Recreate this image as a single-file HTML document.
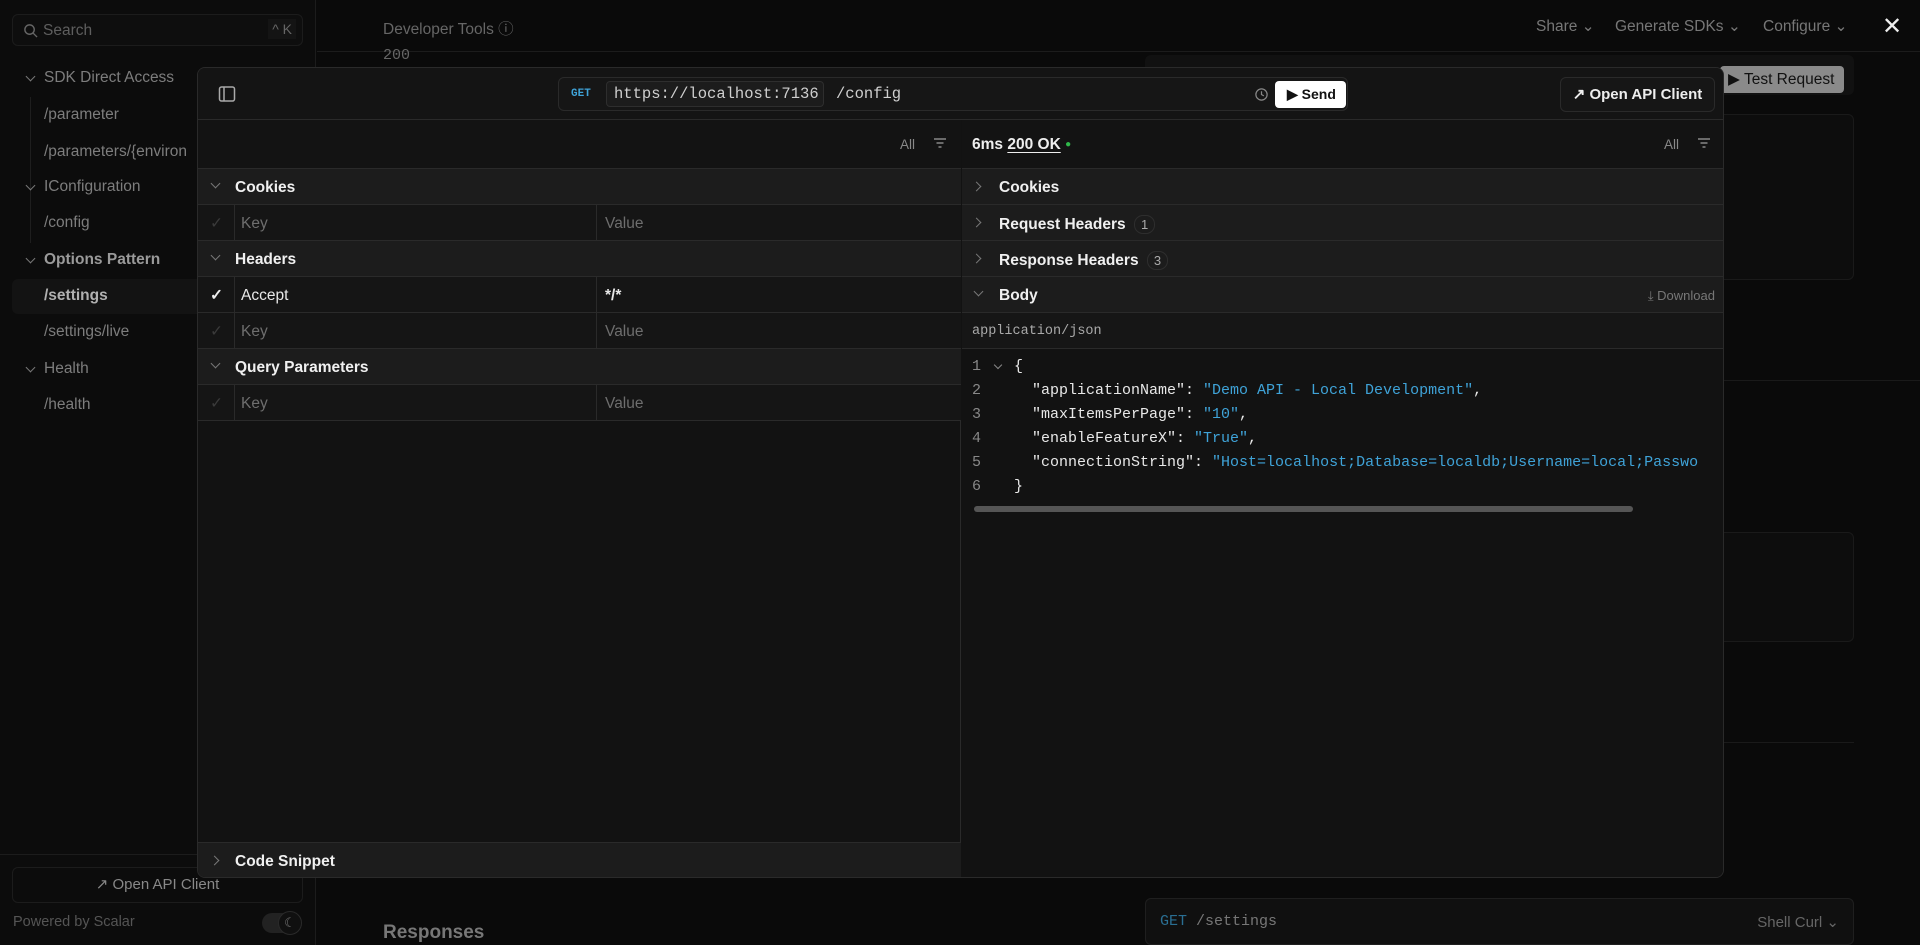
<!DOCTYPE html>
<html><head><meta charset="utf-8"><style>
*{box-sizing:border-box;margin:0;padding:0}
body{width:1920px;height:945px;overflow:hidden;background:#0a0a0a;font-family:"Liberation Sans",sans-serif;color:#e6e6e6;position:relative}
.a{position:absolute}
.sb{left:0;top:0;width:316px;height:945px;background:#0c0c0c;border-right:1px solid #1c1c1c}
.nav{position:absolute;font-size:15.5px;color:#7d7d7d;white-space:nowrap}
.chev{position:absolute;width:7px;height:7px;border-right:1.5px solid #777;border-bottom:1.5px solid #777}
.dn{transform:rotate(45deg)}
.rt{transform:rotate(-45deg)}
.modal{left:197px;top:67px;width:1527px;height:811px;background:#121212;border:1px solid #2a2a2a;border-radius:8px;overflow:hidden}
.row{position:absolute;left:0;height:36px;border-bottom:1px solid #2a2a2a;font-size:15.5px}
.hdr{background:#1c1c1c;font-weight:bold;color:#f0f0f0}
.hdr span.t{position:absolute;left:37px;top:10px}
.kv{background:#151515;color:#6e6e6e}
.mono{font-family:"Liberation Mono",monospace}
.code{position:absolute;font-family:"Liberation Mono",monospace;font-size:15px;color:#e8e8e8;white-space:pre}
.s{color:#3fa3d8}
</style></head><body>

<div class="a sb">
  <div class="a" style="left:12px;top:14px;width:291px;height:32px;border:1px solid #1c1c1c;border-radius:6px;background:#0e0e0e">
    <svg class="a" style="left:10px;top:8px" width="15" height="15" viewBox="0 0 16 16"><circle cx="7" cy="7" r="5" stroke="#666" stroke-width="1.5" fill="none"/><path d="M11 11l4 4" stroke="#666" stroke-width="1.5"/></svg>
    <span class="a" style="left:30px;top:7px;font-size:15.5px;color:#5e5e5e">Search</span>
    <span class="a" style="right:6px;top:4px;font-size:14px;color:#666;background:#141414;padding:2px 4px">^ K</span>
  </div>
  <div class="chev dn" style="left:27px;top:73px"></div><div class="nav" style="left:44px;top:69px">SDK Direct Access</div>
  <div class="a" style="left:30px;top:97px;width:1px;height:122px;background:#1e1e1e"></div>
  <div class="nav" style="left:44px;top:106px">/parameter</div>
  <div class="nav" style="left:44px;top:143px">/parameters/{environ</div>
  <div class="chev dn" style="left:27px;top:182px"></div><div class="nav" style="left:44px;top:178px">IConfiguration</div>
  <div class="a" style="left:30px;top:207px;width:1px;height:36px;background:#1e1e1e"></div>
  <div class="nav" style="left:44px;top:214px">/config</div>
  <div class="chev dn" style="left:27px;top:255px"></div><div class="nav" style="left:44px;top:251px;color:#9a9a9a;font-weight:bold">Options Pattern</div>
  <div class="a" style="left:12px;top:279px;width:300px;height:35px;background:#131313;border-radius:6px"></div>
  <div class="nav" style="left:44px;top:287px;color:#b0b0b0;font-weight:bold">/settings</div>
  <div class="nav" style="left:44px;top:323px">/settings/live</div>
  <div class="chev dn" style="left:27px;top:364px"></div><div class="nav" style="left:44px;top:360px">Health</div>
  <div class="nav" style="left:44px;top:396px">/health</div>
  <div class="a" style="left:0;top:854px;width:316px;height:1px;background:#1c1c1c"></div>
  <div class="a" style="left:12px;top:867px;width:291px;height:36px;border:1px solid #1c1c1c;border-radius:6px;text-align:center;font-size:15px;color:#888;line-height:34px">↗ Open API Client</div>
  <div class="a" style="left:13px;top:914px;font-size:14.5px;color:#555">Powered by Scalar</div>
  <div class="a" style="left:262px;top:913px;width:36px;height:20px;background:#222;border-radius:10px"></div>
  <div class="a" style="left:278px;top:911px;width:24px;height:24px;background:#101010;border:1px solid #2a2a2a;border-radius:12px;color:#777;font-size:13px;text-align:center;line-height:22px">☾</div>
</div>

<div class="a" style="left:317px;top:51px;width:1603px;height:1px;background:#1c1c1c"></div>
<div class="a" style="left:383px;top:17px;font-size:15.5px;color:#666">Developer Tools ⓘ</div>
<div class="a mono" style="left:383px;top:47px;font-size:15px;color:#666">200</div>
<div class="a" style="left:1536px;top:17px;font-size:15.5px;color:#777">Share ⌄</div>
<div class="a" style="left:1615px;top:17px;font-size:15.5px;color:#777">Generate SDKs ⌄</div>
<div class="a" style="left:1763px;top:17px;font-size:15.5px;color:#777">Configure ⌄</div>
<div class="a" style="left:1882px;top:12px;font-size:24px;color:#eee">✕</div>
<div class="a" style="left:1145px;top:55px;width:709px;height:40px;background:#111;border-radius:6px"></div>
<div class="a" style="left:1720px;top:66px;width:124px;height:27px;background:#8a8a8a;border-radius:4px;color:#111;font-size:15.5px;padding:4px 0 0 8px">▶ Test Request</div>
<div class="a" style="left:1145px;top:114px;width:709px;height:166px;border:1px solid #1a1a1a;border-radius:6px;background:#0d0d0d"></div>
<div class="a" style="left:1145px;top:380px;width:775px;height:1px;background:#1a1a1a"></div>
<div class="a" style="left:1145px;top:532px;width:709px;height:110px;border:1px solid #1a1a1a;border-radius:6px;background:#0d0d0d"></div>
<div class="a" style="left:1145px;top:742px;width:709px;height:1px;background:#1a1a1a"></div>
<div class="a" style="left:383px;top:922px;font-size:19px;color:#777;font-weight:bold">Responses</div>
<div class="a" style="left:1145px;top:898px;width:709px;height:47px;border:1px solid #1f1f1f;border-radius:6px;background:#101010">
  <span class="a mono" style="left:14px;top:14px;font-size:15px;color:#2a6f93">GET <span style="color:#777">/settings</span></span>
  <span class="a" style="right:14px;top:14px;font-size:15px;color:#666">Shell Curl ⌄</span>
</div>

<div class="a modal">
  <div class="a" style="left:0;top:0;width:1527px;height:52px;background:#141414;border-bottom:1px solid #2a2a2a"></div>
  <svg class="a" style="left:20px;top:17px" width="18" height="18" viewBox="0 0 18 18"><rect x="1.5" y="2" width="15" height="14" rx="2" stroke="#aaa" stroke-width="1.5" fill="none"/><path d="M6 2v14" stroke="#aaa" stroke-width="1.5"/></svg>
  <div class="a" style="left:360px;top:9px;width:790px;height:34px;border:1px solid #2a2a2a;border-radius:6px;background:#161616">
    <span class="a mono" style="left:12px;top:10px;font-size:11px;font-weight:bold;color:#3fa3d8">GET</span>
    <div class="a" style="left:47px;top:3px;width:218px;height:26px;border:1px solid #2e2e2e;border-radius:4px;background:#1c1c1c"></div>
    <span class="a mono" style="left:55px;top:7px;font-size:15.5px;color:#cfcfcf">https://localhost:7136</span>
    <span class="a mono" style="left:277px;top:7px;font-size:15.5px;color:#cfcfcf">/config</span>
    <svg class="a" style="left:695px;top:9px" width="15" height="15" viewBox="0 0 16 16"><circle cx="8" cy="8" r="6" stroke="#888" stroke-width="1.3" fill="none"/><path d="M8 4.5V8l2.5 1.5" stroke="#888" stroke-width="1.3" fill="none"/></svg>
    <div class="a" style="left:716px;top:3px;width:71px;height:27px;background:#fff;border-radius:4px;color:#111;font-size:14px;font-weight:bold;line-height:27px;padding-left:12px">▶ Send</div>
  </div>
  <div class="a" style="left:1362px;top:9px;width:155px;height:35px;border:1px solid #2a2a2a;border-radius:6px;background:#161616;font-size:15px;font-weight:bold;color:#eee;line-height:33px;text-align:center">↗ Open API Client</div>

  <div class="a" style="left:0;top:52px;width:763px;height:759px;border-right:1px solid #2a2a2a;background:#121212">
    <div class="row" style="top:0;width:763px;height:49px;background:#131313"><span class="a" style="right:46px;top:17px;font-size:13.5px;color:#888">All</span><svg class="a" style="right:14px;top:17px" width="14" height="12" viewBox="0 0 14 12"><path d="M1 2h12M3.5 6h7M5.5 10h3" stroke="#888" stroke-width="1.4"/></svg></div>
    <div class="row hdr" style="top:49px;width:763px"><div class="chev dn" style="left:14px;top:11px"></div><span class="t">Cookies</span></div>
    <div class="row kv" style="top:85px;width:763px"><span class="a" style="left:12px;top:9px;color:#3a3a3a">✓</span><div class="a" style="left:36px;top:0;height:36px;border-left:1px solid #2a2a2a"></div><span class="a" style="left:43px;top:10px">Key</span><div class="a" style="left:398px;top:0;height:36px;border-left:1px solid #2a2a2a"></div><span class="a" style="left:407px;top:10px">Value</span></div>
    <div class="row hdr" style="top:121px;width:763px"><div class="chev dn" style="left:14px;top:11px"></div><span class="t">Headers</span></div>
    <div class="row kv" style="top:157px;width:763px;color:#e8e8e8;font-weight:bold"><span class="a" style="left:12px;top:9px;color:#eee">✓</span><div class="a" style="left:36px;top:0;height:36px;border-left:1px solid #2a2a2a"></div><span class="a" style="left:43px;top:10px;font-weight:normal">Accept</span><div class="a" style="left:398px;top:0;height:36px;border-left:1px solid #2a2a2a"></div><span class="a" style="left:407px;top:10px">*/*</span></div>
    <div class="row kv" style="top:193px;width:763px"><span class="a" style="left:12px;top:9px;color:#3a3a3a">✓</span><div class="a" style="left:36px;top:0;height:36px;border-left:1px solid #2a2a2a"></div><span class="a" style="left:43px;top:10px">Key</span><div class="a" style="left:398px;top:0;height:36px;border-left:1px solid #2a2a2a"></div><span class="a" style="left:407px;top:10px">Value</span></div>
    <div class="row hdr" style="top:229px;width:763px"><div class="chev dn" style="left:14px;top:11px"></div><span class="t">Query Parameters</span></div>
    <div class="row kv" style="top:265px;width:763px"><span class="a" style="left:12px;top:9px;color:#3a3a3a">✓</span><div class="a" style="left:36px;top:0;height:36px;border-left:1px solid #2a2a2a"></div><span class="a" style="left:43px;top:10px">Key</span><div class="a" style="left:398px;top:0;height:36px;border-left:1px solid #2a2a2a"></div><span class="a" style="left:407px;top:10px">Value</span></div>
    <div class="row hdr" style="top:722px;width:763px;border-top:1px solid #2a2a2a;border-bottom:none;height:37px"><div class="chev rt" style="left:13px;top:14px"></div><span class="t">Code Snippet</span></div>
  </div>

  <div class="a" style="left:764px;top:52px;width:763px;height:759px;background:#121212">
    <div class="row" style="top:0;width:763px;height:49px;background:#131313"><span class="a" style="left:10px;top:16px;font-weight:bold;color:#eee">6ms <span style="text-decoration:underline;text-underline-offset:3px">200 OK</span> <span style="color:#2fb84a;font-size:10px;vertical-align:2px">●</span></span><span class="a" style="right:46px;top:17px;font-size:13.5px;color:#888">All</span><svg class="a" style="right:14px;top:17px" width="14" height="12" viewBox="0 0 14 12"><path d="M1 2h12M3.5 6h7M5.5 10h3" stroke="#888" stroke-width="1.4"/></svg></div>
    <div class="row hdr" style="top:49px;width:763px"><div class="chev rt" style="left:11px;top:14px"></div><span class="t">Cookies</span></div>
    <div class="row hdr" style="top:85px;width:763px"><div class="chev rt" style="left:11px;top:14px"></div><span class="t">Request Headers <span style="display:inline-block;font-weight:normal;font-size:13px;color:#aaa;border:1px solid #2e2e2e;border-radius:9px;padding:1px 6px;margin-left:4px">1</span></span></div>
    <div class="row hdr" style="top:121px;width:763px"><div class="chev rt" style="left:11px;top:14px"></div><span class="t">Response Headers <span style="display:inline-block;font-weight:normal;font-size:13px;color:#aaa;border:1px solid #2e2e2e;border-radius:9px;padding:1px 6px;margin-left:4px">3</span></span></div>
    <div class="row hdr" style="top:157px;width:763px"><div class="chev dn" style="left:13px;top:11px"></div><span class="t">Body</span><span class="a" style="right:10px;top:11px;font-size:13px;font-weight:normal;color:#777">⤓ Download</span></div>
    <div class="row" style="top:193px;width:763px;background:#161616"><span class="a mono" style="left:10px;top:11px;font-size:13.5px;color:#aaa">application/json</span></div>
    <div class="code" style="left:10px;top:235px;line-height:24px;color:#888">1
2
3
4
5
6</div>
    <div class="chev dn" style="left:33px;top:242px;width:6px;height:6px;border-color:#888"></div>
    <div class="code" style="left:52px;top:235px;line-height:24px">{
  "applicationName": <span class="s">"Demo API - Local Development"</span>,
  "maxItemsPerPage": <span class="s">"10"</span>,
  "enableFeatureX": <span class="s">"True"</span>,
  "connectionString": <span class="s">"Host=localhost;Database=localdb;Username=local;Passwo</span>
}</div>
    <div class="a" style="left:12px;top:386px;width:659px;height:6px;background:#555;border-radius:3px"></div>
  </div>
</div>
</body></html>
